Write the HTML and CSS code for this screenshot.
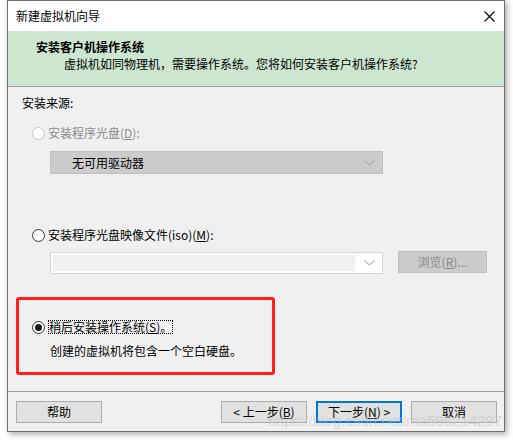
FILE: index.html
```html
<!DOCTYPE html>
<html lang="zh-CN">
<head>
    <meta charset="UTF-8">
    <title>新建虚拟机向导</title>
    <link rel="stylesheet" href="styles.css">
</head>
<body>
    <div class="window">
        <div class="titlebar">
            <span class="title">新建虚拟机向导</span>
            <svg class="close" width="11" height="11" viewBox="0 0 11 11">
                <path d="M0.5 0.5 L10.5 10.5 M10.5 0.5 L0.5 10.5" stroke="#000" stroke-width="1.1" fill="none"/>
            </svg>
        </div>

        <div class="header">
            <div class="header-title">安装客户机操作系统</div>
            <div class="header-sub">虚拟机如同物理机，需要操作系统。您将如何安装客户机操作系统?</div>
        </div>

        <div class="content">
            <div class="label">安装来源:</div>

            <div class="radio-row disabled row-disc">
                <span class="radio"></span>
                <span>安装程序光盘(<u>D</u>):</span>
            </div>
            <div class="combo combo-disabled">
                <span class="combo-text">无可用驱动器</span>
                <svg class="chev" width="11" height="6" viewBox="0 0 11 6"><polyline points="0.5,0.5 5.5,5 10.5,0.5" fill="none" stroke="#9a9a9a" stroke-width="1"/></svg>
            </div>

            <div class="radio-row row-iso">
                <span class="radio"></span>
                <span>安装程序光盘映像文件(iso)(<u>M</u>):</span>
            </div>
            <div class="iso-line">
                <div class="combo combo-iso">
                    <span class="iso-field"></span>
                    <svg class="chev" width="11" height="6" viewBox="0 0 11 6"><polyline points="0.5,0.5 5.5,5 10.5,0.5" fill="none" stroke="#9a9a9a" stroke-width="1"/></svg>
                </div>
                <div class="btn btn-disabled">浏览(<u>R</u>)...</div>
            </div>

            <div class="later-box">
                <div class="radio-row row-later">
                    <span class="radio checked"></span>
                    <span class="focus">稍后安装操作系统(<u>S</u>)。</span>
                </div>
                <div class="later-desc">创建的虚拟机将包含一个空白硬盘。</div>
            </div>
        </div>

        <div class="footer">
            <div class="btn">帮助</div>
            <div class="nav">
                <div class="btn">&lt; 上一步(<u>B</u>)</div>
                <div class="btn btn-default">下一步(<u>N</u>) &gt;</div>
                <div class="btn">取消</div>
            </div>
        </div>

        <div class="watermark">https://blog.csdn.net/ma598214297</div>
    </div>
</body>
</html>
```

FILE: styles.css
```css
body {
    margin: 0;
    background: #ffffff;
    font-family: "Noto Sans CJK SC", "Liberation Sans", sans-serif;
    font-size: 12px;
    color: #000;
    width: 513px;
    height: 440px;
    overflow: hidden;
}
.window {
    position: relative;
    margin-left: 7px;
    width: 496px;
    height: 430px;
    border: 1px solid #6f6f6f;
    background: #f0f0f0;
    display: flex;
    flex-direction: column;
    box-shadow: 2px 2px 6px rgba(0,0,0,0.35);
}
.titlebar {
    height: 30px;
    background: #ffffff;
    display: flex;
    align-items: center;
    justify-content: space-between;
    padding: 0 9px 0 8px;
    line-height: 16px;
}
.close {
    display: block;
    margin-top: 1px;
}
.header {
    height: 56px;
    background: #cce6d0;
    border-bottom: 1px solid #a0a0a0;
    box-sizing: border-box;
    padding-top: 8px;
    line-height: 16px;
}
.header-title {
    font-weight: bold;
    padding-left: 28px;
}
.header-sub {
    padding-left: 56px;
    margin-top: 1px;
}
.content {
    flex: 1;
    padding: 8px 0 0 14px;
    line-height: 16px;
}
.radio-row {
    display: flex;
    align-items: center;
    gap: 3px;
    margin-left: 10px;
}
.radio-row u, .btn u {
    text-decoration: underline;
    text-underline-offset: 1px;
}
.disabled {
    color: #8a8a8a;
}
.radio {
    width: 11px;
    height: 11px;
    border: 1px solid #333;
    border-radius: 50%;
    background: #fff;
    position: relative;
    flex: none;
}
.disabled .radio {
    border-color: #c6c6c6;
}
.radio.checked::after {
    content: "";
    position: absolute;
    left: 2px;
    top: 2px;
    width: 7px;
    height: 7px;
    border-radius: 50%;
    background: #1a1a1a;
}
.row-disc {
    margin-top: 14px;
}
.combo {
    box-sizing: border-box;
    width: 333px;
    height: 23px;
    margin-left: 28px;
    display: flex;
    align-items: center;
    justify-content: space-between;
    padding: 0 7px 0 21px;
}
.combo-disabled {
    margin-top: 10px;
    background: #cccccc;
    border: 1px solid #bfbfbf;
}
.row-iso {
    margin-top: 53px;
}
.iso-line {
    display: flex;
    align-items: flex-start;
    gap: 15px;
    margin-top: 8px;
}
.combo-iso {
    height: 22px;
    margin-top: 1px;
    background: #ffffff;
    border: 1px solid #d4d4d4;
    padding: 2px 7px 2px 2px;
}
.iso-field {
    display: block;
    height: 16px;
    width: 302px;
    background: #f0f0f0;
}
.btn {
    box-sizing: border-box;
    width: 86px;
    height: 22px;
    background: #e1e1e1;
    border: 1px solid #adadad;
    display: flex;
    align-items: center;
    justify-content: center;
    line-height: 16px;
}
.btn-disabled {
    width: 89px;
    background: #cccccc;
    border-color: #bfbfbf;
    color: #8a8a8a;
}
.btn-default {
    border: 2px solid #0078d7;
}
.later-box {
    box-sizing: border-box;
    width: 259px;
    height: 78px;
    margin: 23px 0 0 -6px;
    border: 3px solid #ff1f1f;
    border-radius: 3px;
    padding-top: 20px;
}
.row-later {
    margin-left: 13px;
}
.focus {
    outline: 1px dotted #000;
    outline-offset: -1px;
    line-height: 14px;
    padding: 0 1px;
}
.later-desc {
    margin: 9px 0 0 31px;
}
.footer {
    border-top: 1px solid #a0a0a0;
    padding: 9px 7px 8px 8px;
    display: flex;
    justify-content: space-between;
}
.nav {
    display: flex;
    gap: 9px;
}
.watermark {
    position: absolute;
    right: 2px;
    top: 411px;
    font-family: "Liberation Sans", sans-serif;
    font-size: 15px;
    line-height: 18px;
    color: rgba(190,190,190,0.5);
    white-space: nowrap;
    pointer-events: none;
}
```
